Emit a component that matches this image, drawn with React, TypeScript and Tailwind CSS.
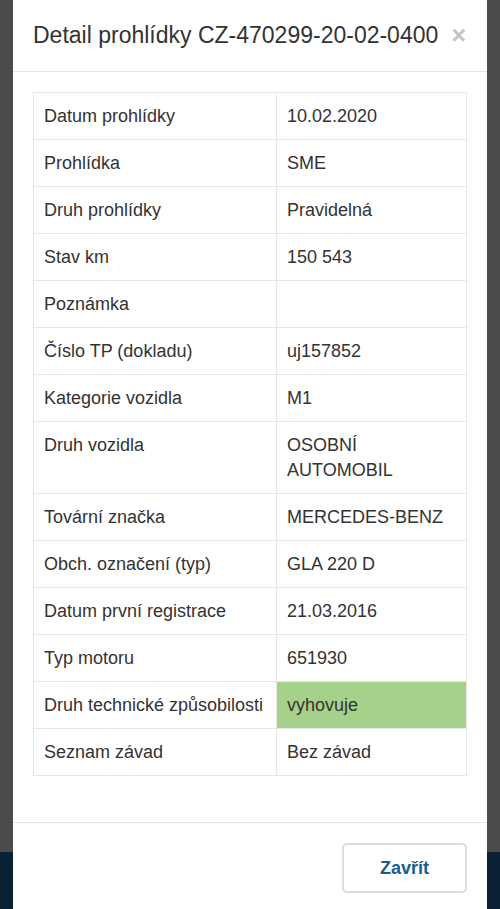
const rows: { label: string; value: string; ok?: boolean }[] = [
  { label: 'Datum prohlídky', value: '10.02.2020' },
  { label: 'Prohlídka', value: 'SME' },
  { label: 'Druh prohlídky', value: 'Pravidelná' },
  { label: 'Stav km', value: '150 543' },
  { label: 'Poznámka', value: '' },
  { label: 'Číslo TP (dokladu)', value: 'uj157852' },
  { label: 'Kategorie vozidla', value: 'M1' },
  { label: 'Druh vozidla', value: 'OSOBNÍ AUTOMOBIL' },
  { label: 'Tovární značka', value: 'MERCEDES-BENZ' },
  { label: 'Obch. označení (typ)', value: 'GLA 220 D' },
  { label: 'Datum první registrace', value: '21.03.2016' },
  { label: 'Typ motoru', value: '651930' },
  { label: 'Druh technické způsobilosti', value: 'vyhovuje', ok: true },
  { label: 'Seznam závad', value: 'Bez závad' },
]

export default function App() {
  return (
    <div className="relative w-[500px] h-[909px] overflow-hidden font-['Liberation_Sans',Arial,sans-serif]">
      {/* page under the overlay */}
      <div className="flex flex-col h-full">
        <div className="flex-1 bg-[#4b4b4b]" />
        <div className="h-[57px] bg-[#0b2236]" />
      </div>

      {/* Modal */}
      <div className="absolute left-[13px] top-0 w-[474px] h-[909px] bg-white flex flex-col">
        <div className="h-[72px] px-[20px] flex items-center justify-between border-b border-[#e5e5e5]">
          <h4 className="text-[23px] text-[#333] leading-none">Detail prohlídky CZ-470299-20-02-0400</h4>
          <span className="text-[#c4c4c4] text-[25px] font-bold leading-none mr-[1px]">×</span>
        </div>

        <div className="h-[750px] p-[20px]">
          <table className="w-full border-collapse text-[18px] text-[#333] leading-[25px]">
            <tbody>
              {rows.map(r => (
                <tr key={r.label}>
                  <td className="w-[243px] border border-[#e8e8e8] px-[10px] py-[10.5px] align-top">{r.label}</td>
                  <td className={`border border-[#e8e8e8] px-[10px] py-[10.5px] align-top ${r.ok ? 'bg-[#a6d18b]' : ''}`}>
                    {r.value}
                  </td>
                </tr>
              ))}
            </tbody>
          </table>
        </div>

        <div className="border-t border-[#e5e5e5] px-[20px] pt-[20px] flex justify-end">
          <button className="w-[125px] h-[50px] rounded-[5px] border-2 border-[#dddddd] text-[#15608f] font-bold text-[18px] bg-white">
            Zavřít
          </button>
        </div>
      </div>
    </div>
  )
}
